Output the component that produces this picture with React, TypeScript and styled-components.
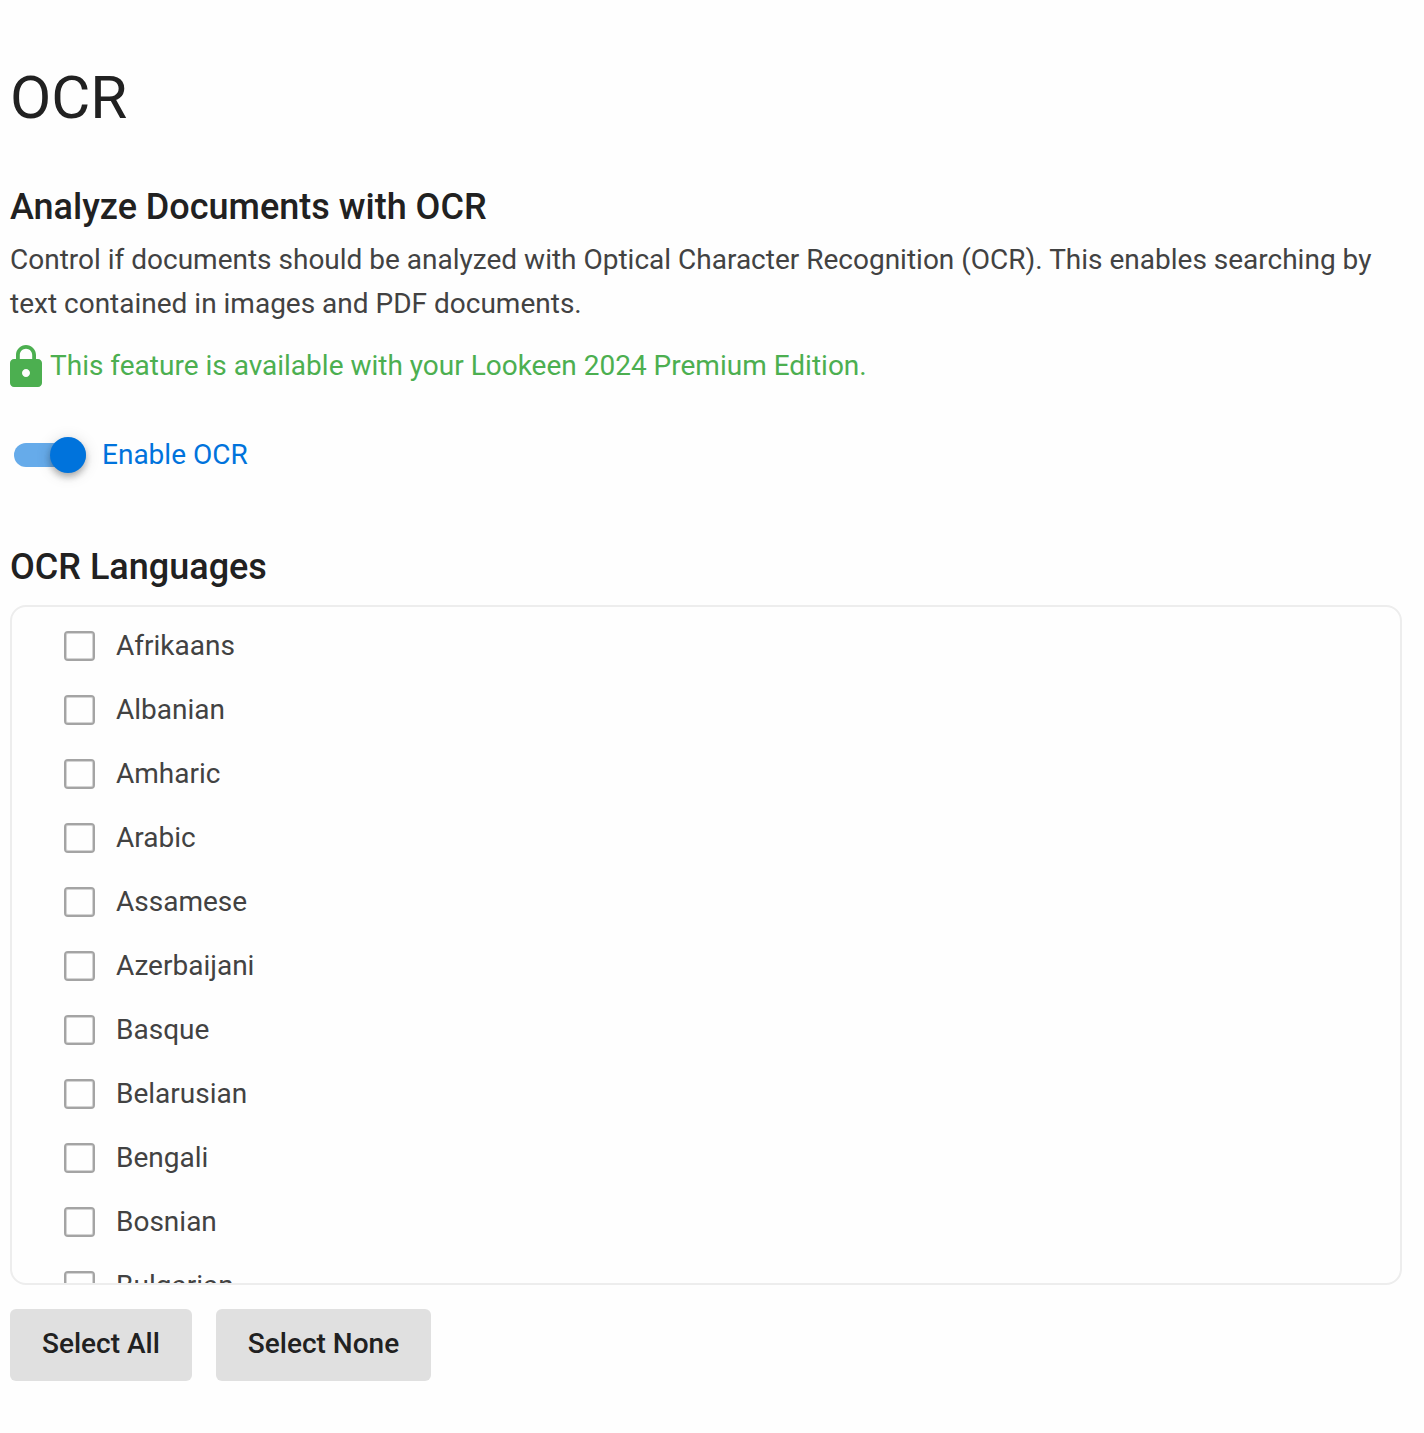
import React, { useState } from "react";
import styled, { createGlobalStyle } from "styled-components";

const GlobalStyle = createGlobalStyle`
  *, *::before, *::after { box-sizing: border-box; }
  body {
    margin: 0;
    background: #fefefe;
    color: #424242;
    font-family: Roboto, "Liberation Sans", sans-serif;
    font-size: 28px;
    line-height: 44px;
  }
`;

const Page = styled.main`
  padding: 56px 22px 52px 10px;
`;

const Title = styled.h1`
  margin: 0;
  color: #212121;
  font-size: 60px;
  font-weight: 400;
  line-height: 84px;
`;

const Section = styled.section`
  margin-top: 45px;
`;

const Heading = styled.h2`
  margin: 0;
  color: #212121;
  font-size: 36px;
  font-weight: 500;
  line-height: 44px;
`;

const Description = styled.p`
  margin: 9px 0 0;
`;

const Notice = styled.p`
  display: flex;
  align-items: center;
  gap: 8px;
  margin: 18px 0 0;
  color: #4caf50;
`;

const LockIcon = styled.svg`
  flex: none;
  width: 32px;
  height: 42px;
`;

const SwitchLabel = styled.label`
  display: flex;
  align-items: center;
  gap: 16px;
  width: fit-content;
  margin: 45px 0 0 4px;
  color: #0073dc;
  cursor: pointer;
`;

const Switch = styled.input`
  appearance: none;
  display: flex;
  align-items: center;
  width: 72px;
  height: 24px;
  margin: 0;
  border-radius: 12px;
  background: #bdbdbd;

  &::before {
    content: "";
    flex: none;
    width: 36px;
    height: 36px;
    border-radius: 50%;
    background: #fafafa;
    box-shadow:
      0 4px 8px -2px rgba(0, 0, 0, 0.2),
      0 4px 6px rgba(0, 0, 0, 0.14),
      0 2px 16px rgba(0, 0, 0, 0.14);
  }

  &:checked {
    background: #66abea;
  }

  &:checked::before {
    margin-left: 36px;
    background: #0073dc;
  }
`;

const LanguageSection = styled(Section)`
  margin-top: 68px;
`;

const LanguageList = styled.ul`
  height: 680px;
  margin: 16px 0 0;
  padding: 7px 52px;
  overflow-y: auto;
  scrollbar-width: none;
  border: 2px solid #ededed;
  border-radius: 16px;
  list-style: none;
`;

const LanguageLabel = styled.label`
  display: flex;
  align-items: center;
  gap: 21px;
  height: 64px;
  cursor: pointer;
`;

const Checkbox = styled.input`
  appearance: none;
  flex: none;
  width: 31px;
  height: 30px;
  margin: 0;
  border: 2px solid #a4a4a4;
  border-radius: 4px;
  box-shadow: inset 0 0 0 1px #d4d4d4;

  &:checked {
    background: #0073dc;
    border-color: #0073dc;
    box-shadow: none;
  }
`;

const Actions = styled.div`
  display: flex;
  gap: 24px;
  margin-top: 24px;
`;

const ActionButton = styled.button`
  height: 72px;
  padding: 0 32px 2px;
  border: 0;
  border-radius: 6px;
  background: #e0e0e0;
  color: #212121;
  font: 500 28px/44px Roboto, "Liberation Sans", sans-serif;
  cursor: pointer;
`;

const languages = [
  "Afrikaans",
  "Albanian",
  "Amharic",
  "Arabic",
  "Assamese",
  "Azerbaijani",
  "Basque",
  "Belarusian",
  "Bengali",
  "Bosnian",
  "Bulgarian",
];

export default function App() {
  const [enabled, setEnabled] = useState(true);
  const [selected, setSelected] = useState<string[]>([]);

  const toggle = (language: string) =>
    setSelected((current) =>
      current.includes(language)
        ? current.filter((item) => item !== language)
        : [...current, language],
    );

  return (
    <>
      <GlobalStyle />
      <Page>
        <Title>OCR</Title>
        <Section>
          <Heading>Analyze Documents with OCR</Heading>
          <Description>
            Control if documents should be analyzed with Optical Character Recognition (OCR). This
            enables searching by text contained in images and PDF documents.
          </Description>
          <Notice>
            <LockIcon viewBox="4 1 16 21" aria-hidden="true">
              <path
                fill="currentColor"
                d="M18 8h-1V6c0-2.76-2.24-5-5-5S7 3.24 7 6v2H6c-1.1 0-2 .9-2 2v10c0 1.1.9 2 2 2h12c1.1 0 2-.9 2-2V10c0-1.1-.9-2-2-2zm-6 9c-1.1 0-2-.9-2-2s.9-2 2-2 2 .9 2 2-.9 2-2 2zm3.1-9H8.9V6c0-1.71 1.39-3.1 3.1-3.1s3.1 1.39 3.1 3.1v2z"
              />
            </LockIcon>
            This feature is available with your Lookeen 2024 Premium Edition.
          </Notice>
          <SwitchLabel>
            <Switch
              type="checkbox"
              role="switch"
              checked={enabled}
              onChange={() => setEnabled(!enabled)}
            />
            Enable OCR
          </SwitchLabel>
        </Section>
        <LanguageSection>
          <Heading>OCR Languages</Heading>
          <LanguageList>
            {languages.map((language) => (
              <li key={language}>
                <LanguageLabel>
                  <Checkbox
                    type="checkbox"
                    checked={selected.includes(language)}
                    onChange={() => toggle(language)}
                  />
                  {language}
                </LanguageLabel>
              </li>
            ))}
          </LanguageList>
          <Actions>
            <ActionButton type="button" onClick={() => setSelected(languages)}>
              Select All
            </ActionButton>
            <ActionButton type="button" onClick={() => setSelected([])}>
              Select None
            </ActionButton>
          </Actions>
        </LanguageSection>
      </Page>
    </>
  );
}
